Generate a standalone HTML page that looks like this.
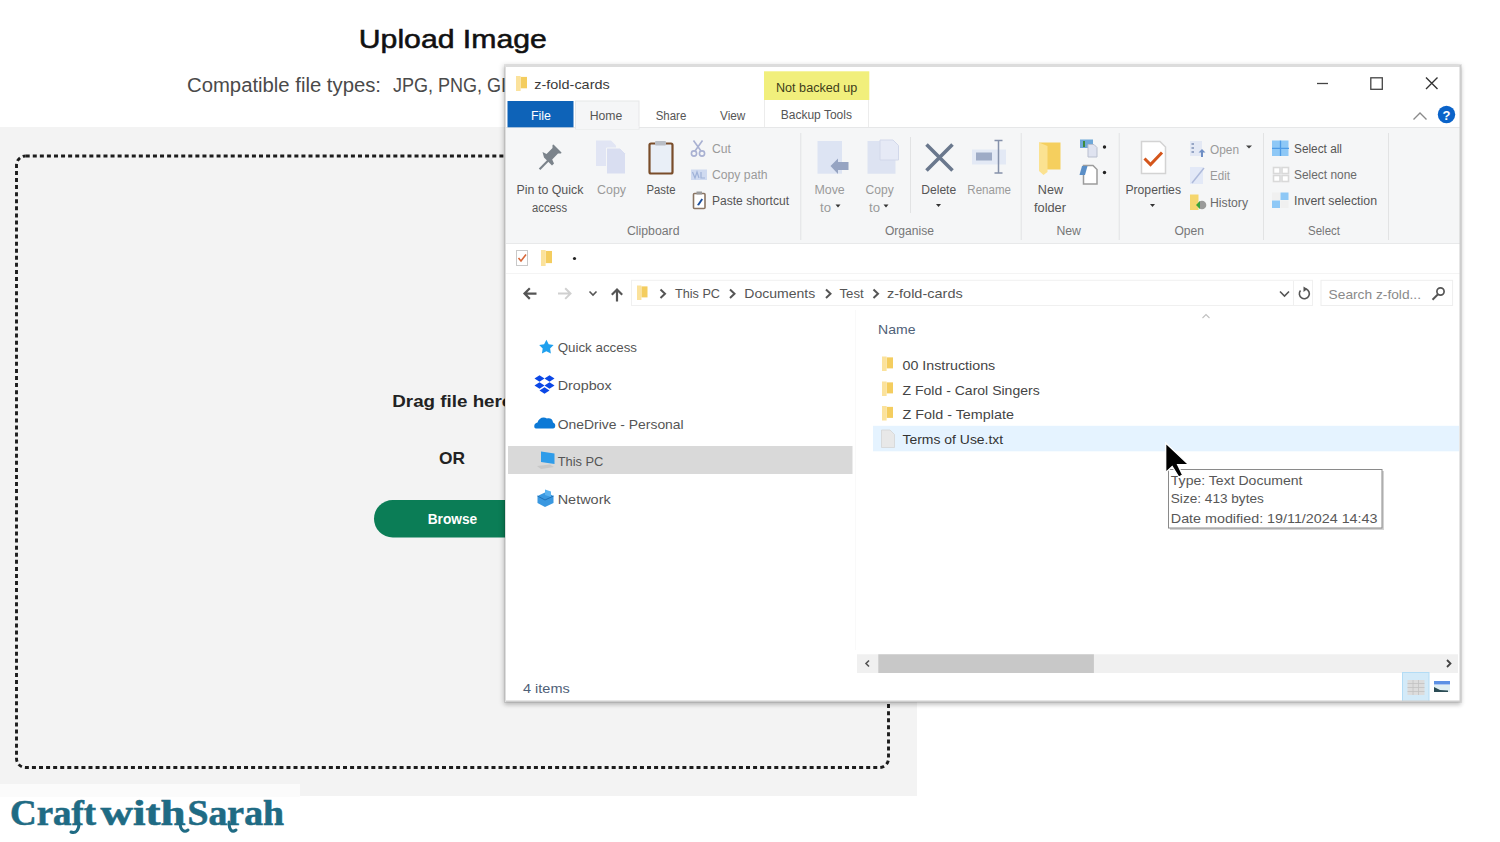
<!DOCTYPE html>
<html><head><meta charset="utf-8"><title>Upload Image</title>
<style>
html,body{margin:0;padding:0;background:#fff;width:1500px;height:842px;overflow:hidden;font-family:"Liberation Sans",sans-serif;}
.layer{position:absolute;left:0;top:0;}
.wrap{position:absolute;left:0;top:0;width:1500px;height:842px;}
.win{position:absolute;left:505px;top:65px;width:956px;height:637px;background:#fff;
 box-shadow:0 0 0 1px rgba(0,0,0,0.07), -1px 1px 5px 1px rgba(0,0,0,0.16), 0 3px 4px rgba(0,0,0,0.12);}

</style></head><body><div class="wrap">
<svg class="layer" width="1500" height="842" viewBox="0 0 1500 842">
<rect x="0" y="127" width="917" height="669" fill="#f3f3f3"/><rect x="0" y="784" width="300" height="13" fill="#fbfbfb"/><rect x="16.5" y="156" width="872" height="611.5" rx="9" ry="9" fill="none" stroke="#1c1c1c" stroke-width="2.9" stroke-dasharray="4 3.07" stroke-dashoffset="-0.2"/><text x="358.8" y="48.3" font-family="Liberation Sans" font-size="26.5" fill="#111" textLength="188" lengthAdjust="spacingAndGlyphs" stroke="#111" stroke-width="0.55">Upload Image</text>
<text x="187" y="91.5" font-family="Liberation Sans" font-size="19.5" fill="#4a4a4a" textLength="194" lengthAdjust="spacingAndGlyphs">Compatible file types:</text>
<text x="393" y="91.5" font-family="Liberation Sans" font-size="19.5" fill="#4a4a4a" textLength="124" lengthAdjust="spacingAndGlyphs">JPG, PNG, GIF</text>
<text x="392.3" y="407.3" font-family="Liberation Sans" font-size="17" fill="#222" font-weight="bold" textLength="120" lengthAdjust="spacingAndGlyphs">Drag file here</text>
<text x="439" y="463.8" font-family="Liberation Sans" font-size="17" fill="#222" font-weight="bold" textLength="26" lengthAdjust="spacingAndGlyphs">OR</text>
<rect x="374" y="500" width="156" height="37.5" rx="18.75" fill="#0b7d56"/><text x="427.7" y="524.4" font-family="Liberation Sans" font-size="14" fill="#ffffff" font-weight="bold" textLength="49.5" lengthAdjust="spacingAndGlyphs">Browse</text>
<text x="10" y="825" font-family="Liberation Serif" font-size="35" fill="#1f6b84" font-weight="bold" textLength="86" lengthAdjust="spacingAndGlyphs" stroke="#1f6b84" stroke-width="0.6">Craft</text>
<text x="100.5" y="825" font-family="Liberation Serif" font-size="35" fill="#1f6b84" font-weight="bold" textLength="85" lengthAdjust="spacingAndGlyphs" stroke="#1f6b84" stroke-width="0.6">with</text>
<text x="187.5" y="825" font-family="Liberation Serif" font-size="35" fill="#1f6b84" font-weight="bold" textLength="96.5" lengthAdjust="spacingAndGlyphs" stroke="#1f6b84" stroke-width="0.6">Sarah</text>
<g fill="none" stroke="#1f6b84" stroke-width="3" stroke-linecap="round"><path d="M79 823 C79 830 76 834 71 832"/><path d="M180 822 C180 830 184 833 188 830"/><path d="M229 822 C229 830 232 833 236 830"/></g></svg>
<div class="win"><svg width="956" height="637" viewBox="0 0 956 637">
<rect x="0" y="0" width="956" height="637" fill="#fff"/><rect x="0" y="0" width="956" height="2" fill="#dcdcdc"/><rect x="1" y="62.5" width="954" height="116.0" fill="#f5f6f7"/><rect x="1" y="62" width="954" height="1" fill="#e6e7e8"/><rect x="1" y="178" width="954" height="1" fill="#e8e9ea"/><rect x="2.5" y="36" width="66" height="26.3" fill="#0e63b8"/><text x="26" y="55" font-family="Liberation Sans" font-size="12.5" fill="#ffffff" textLength="20" lengthAdjust="spacingAndGlyphs">File</text>
<rect x="70.5" y="36" width="63.5" height="28" fill="#f5f6f7" stroke="#e6e7e8" stroke-width="1"/><rect x="71" y="61" width="62.5" height="3" fill="#f5f6f7"/><text x="84.7" y="54.5" font-family="Liberation Sans" font-size="12.5" fill="#555" textLength="32.6" lengthAdjust="spacingAndGlyphs">Home</text>
<text x="150.7" y="54.5" font-family="Liberation Sans" font-size="12.5" fill="#555" textLength="30.6" lengthAdjust="spacingAndGlyphs">Share</text>
<text x="215" y="54.5" font-family="Liberation Sans" font-size="12.5" fill="#555" textLength="25.3" lengthAdjust="spacingAndGlyphs">View</text>
<rect x="259" y="6.3" width="105.3" height="28.7" fill="#f1ef7c"/><text x="271" y="27" font-family="Liberation Sans" font-size="12.5" fill="#3d3d1a" textLength="81.3" lengthAdjust="spacingAndGlyphs">Not backed up</text>
<rect x="259" y="35" width="1" height="27" fill="#ececec"/><rect x="363" y="35" width="1" height="27" fill="#ececec"/><text x="275.7" y="54" font-family="Liberation Sans" font-size="12.5" fill="#555" textLength="71.3" lengthAdjust="spacingAndGlyphs">Backup Tools</text>
<text x="29.3" y="24" font-family="Liberation Sans" font-size="13.5" fill="#3a3a3a" textLength="75.4" lengthAdjust="spacingAndGlyphs">z-fold-cards</text>
<text x="11.6" y="129" font-family="Liberation Sans" font-size="12.5" fill="#555" textLength="66.8" lengthAdjust="spacingAndGlyphs">Pin to Quick</text>
<text x="27" y="146.5" font-family="Liberation Sans" font-size="12.5" fill="#555" textLength="35" lengthAdjust="spacingAndGlyphs">access</text>
<text x="92" y="129" font-family="Liberation Sans" font-size="12.5" fill="#9a9a9a" textLength="29" lengthAdjust="spacingAndGlyphs">Copy</text>
<text x="141.5" y="129" font-family="Liberation Sans" font-size="12.5" fill="#555" textLength="29" lengthAdjust="spacingAndGlyphs">Paste</text>
<text x="207" y="88.2" font-family="Liberation Sans" font-size="12.5" fill="#9a9a9a" textLength="19" lengthAdjust="spacingAndGlyphs">Cut</text>
<text x="207" y="114.2" font-family="Liberation Sans" font-size="12.5" fill="#9a9a9a" textLength="55.6" lengthAdjust="spacingAndGlyphs">Copy path</text>
<text x="207" y="140.2" font-family="Liberation Sans" font-size="12.5" fill="#555" textLength="77" lengthAdjust="spacingAndGlyphs">Paste shortcut</text>
<text x="122" y="169.8" font-family="Liberation Sans" font-size="12.5" fill="#777" textLength="52.5" lengthAdjust="spacingAndGlyphs">Clipboard</text>
<text x="309.4" y="129" font-family="Liberation Sans" font-size="12.5" fill="#9a9a9a" textLength="30.4" lengthAdjust="spacingAndGlyphs">Move</text>
<text x="315" y="146.5" font-family="Liberation Sans" font-size="12.5" fill="#9a9a9a" textLength="11" lengthAdjust="spacingAndGlyphs">to</text>
<text x="360.6" y="129" font-family="Liberation Sans" font-size="12.5" fill="#9a9a9a" textLength="28.2" lengthAdjust="spacingAndGlyphs">Copy</text>
<text x="364" y="146.5" font-family="Liberation Sans" font-size="12.5" fill="#9a9a9a" textLength="11" lengthAdjust="spacingAndGlyphs">to</text>
<text x="416.3" y="129" font-family="Liberation Sans" font-size="12.5" fill="#555" textLength="34.9" lengthAdjust="spacingAndGlyphs">Delete</text>
<text x="462.3" y="129" font-family="Liberation Sans" font-size="12.5" fill="#9a9a9a" textLength="43.7" lengthAdjust="spacingAndGlyphs">Rename</text>
<text x="379.9" y="169.9" font-family="Liberation Sans" font-size="12.5" fill="#777" textLength="49" lengthAdjust="spacingAndGlyphs">Organise</text>
<text x="532.8" y="129" font-family="Liberation Sans" font-size="12.5" fill="#555" textLength="25.2" lengthAdjust="spacingAndGlyphs">New</text>
<text x="529" y="146.5" font-family="Liberation Sans" font-size="12.5" fill="#555" textLength="32" lengthAdjust="spacingAndGlyphs">folder</text>
<text x="551.4" y="170" font-family="Liberation Sans" font-size="12.5" fill="#777" textLength="24.6" lengthAdjust="spacingAndGlyphs">New</text>
<text x="620.4" y="129" font-family="Liberation Sans" font-size="12.5" fill="#555" textLength="55.6" lengthAdjust="spacingAndGlyphs">Properties</text>
<text x="705" y="89" font-family="Liberation Sans" font-size="12.5" fill="#9a9a9a" textLength="29" lengthAdjust="spacingAndGlyphs">Open</text>
<text x="705" y="115" font-family="Liberation Sans" font-size="12.5" fill="#9a9a9a" textLength="20" lengthAdjust="spacingAndGlyphs">Edit</text>
<text x="705" y="142" font-family="Liberation Sans" font-size="12.5" fill="#6a6a6a" textLength="38" lengthAdjust="spacingAndGlyphs">History</text>
<text x="669.4" y="170" font-family="Liberation Sans" font-size="12.5" fill="#777" textLength="29.6" lengthAdjust="spacingAndGlyphs">Open</text>
<text x="789" y="88" font-family="Liberation Sans" font-size="12.5" fill="#555" textLength="48" lengthAdjust="spacingAndGlyphs">Select all</text>
<text x="789" y="114" font-family="Liberation Sans" font-size="12.5" fill="#6a6a6a" textLength="63" lengthAdjust="spacingAndGlyphs">Select none</text>
<text x="789" y="140" font-family="Liberation Sans" font-size="12.5" fill="#555" textLength="83" lengthAdjust="spacingAndGlyphs">Invert selection</text>
<text x="803" y="170" font-family="Liberation Sans" font-size="12.5" fill="#777" textLength="32" lengthAdjust="spacingAndGlyphs">Select</text>
<rect x="295.3" y="68" width="1" height="107" fill="#e2e3e4"/><rect x="405" y="72" width="1" height="76" fill="#e2e3e4"/><rect x="515.7" y="68" width="1" height="107" fill="#e2e3e4"/><rect x="613.7" y="68" width="1" height="107" fill="#e2e3e4"/><rect x="758" y="68" width="1" height="107" fill="#e2e3e4"/><rect x="883" y="68" width="1" height="107" fill="#e2e3e4"/><rect x="1" y="208" width="954" height="1" fill="#f4f4f4"/><rect x="350" y="245" width="1" height="340" fill="#f9f9f9"/><rect x="126.5" y="215.3" width="681.0" height="25.2" fill="#fff" stroke="#f0f0f0" stroke-width="1"/><rect x="788" y="216" width="1" height="24" fill="#efefef"/><rect x="816" y="215.3" width="131.5999999999999" height="25.2" fill="#fff" stroke="#eeeeee" stroke-width="1"/><text x="170" y="233.3" font-family="Liberation Sans" font-size="13.5" fill="#555" textLength="45" lengthAdjust="spacingAndGlyphs">This PC</text>
<text x="239.3" y="233.3" font-family="Liberation Sans" font-size="13.5" fill="#555" textLength="71" lengthAdjust="spacingAndGlyphs">Documents</text>
<text x="334.5" y="233.3" font-family="Liberation Sans" font-size="13.5" fill="#555" textLength="24.2" lengthAdjust="spacingAndGlyphs">Test</text>
<text x="382" y="233.3" font-family="Liberation Sans" font-size="13.5" fill="#555" textLength="75.7" lengthAdjust="spacingAndGlyphs">z-fold-cards</text>
<text x="823.6" y="233.7" font-family="Liberation Sans" font-size="13.5" fill="#8a8a8a" textLength="92.4" lengthAdjust="spacingAndGlyphs">Search z-fold...</text>
<rect x="3" y="381" width="344.5" height="28" fill="#d9d9d9"/><text x="52.7" y="287" font-family="Liberation Sans" font-size="13.5" fill="#555" textLength="79.3" lengthAdjust="spacingAndGlyphs">Quick access</text>
<text x="52.7" y="325" font-family="Liberation Sans" font-size="13.5" fill="#555" textLength="54" lengthAdjust="spacingAndGlyphs">Dropbox</text>
<text x="52.7" y="363.5" font-family="Liberation Sans" font-size="13.5" fill="#555" textLength="126" lengthAdjust="spacingAndGlyphs">OneDrive - Personal</text>
<text x="52.7" y="401" font-family="Liberation Sans" font-size="13.5" fill="#555" textLength="45.7" lengthAdjust="spacingAndGlyphs">This PC</text>
<text x="52.7" y="438.5" font-family="Liberation Sans" font-size="13.5" fill="#555" textLength="53" lengthAdjust="spacingAndGlyphs">Network</text>
<text x="373.1" y="269" font-family="Liberation Sans" font-size="13.5" fill="#4f6178" textLength="37.4" lengthAdjust="spacingAndGlyphs">Name</text>
<rect x="368" y="360.8" width="586" height="25.5" fill="#e5f3ff"/><text x="397.5" y="304.7" font-family="Liberation Sans" font-size="13.5" fill="#444" textLength="92.7" lengthAdjust="spacingAndGlyphs">00 Instructions</text>
<text x="397.5" y="329.6" font-family="Liberation Sans" font-size="13.5" fill="#444" textLength="137.2" lengthAdjust="spacingAndGlyphs">Z Fold - Carol Singers</text>
<text x="397.5" y="353.8" font-family="Liberation Sans" font-size="13.5" fill="#444" textLength="111.4" lengthAdjust="spacingAndGlyphs">Z Fold - Template</text>
<text x="397.5" y="378.6" font-family="Liberation Sans" font-size="13.5" fill="#333" textLength="100.7" lengthAdjust="spacingAndGlyphs">Terms of Use.txt</text>
<rect x="352" y="589.3" width="601" height="18.7" fill="#f0f0f0"/><rect x="373.3" y="589.3" width="215.60000000000014" height="18.7" fill="#c8c8c8"/><text x="18" y="627.7" font-family="Liberation Sans" font-size="13" fill="#4f6178" textLength="46.7" lengthAdjust="spacingAndGlyphs">4 items</text>
<rect x="665" y="406" width="214" height="59" fill="#c8c8c8" opacity="0.8"/><rect x="663.5" y="404.5" width="213.5" height="58.5" fill="#fff" stroke="#8a8a8a" stroke-width="1"/><text x="665.8" y="420" font-family="Liberation Sans" font-size="13.5" fill="#575757" textLength="131.7" lengthAdjust="spacingAndGlyphs">Type: Text Document</text>
<text x="665.8" y="438.3" font-family="Liberation Sans" font-size="13.5" fill="#575757" textLength="93" lengthAdjust="spacingAndGlyphs">Size: 413 bytes</text>
<text x="665.8" y="457.5" font-family="Liberation Sans" font-size="13.5" fill="#575757" textLength="206.7" lengthAdjust="spacingAndGlyphs">Date modified: 19/11/2024 14:43</text>
<g transform="translate(-505,-65)"><g transform="translate(516,76)"><rect x="4.62" y="0.90" width="6.38" height="11.40" fill="#f4cd5f"/><rect x="0" y="0" width="4.62" height="15" fill="#fbe29c"/></g><rect x="516.5" y="250.5" width="11" height="15" fill="#fff" stroke="#c9c9c9" stroke-width="1"/><path d="M518.5 258 L521 261 L526 254.5" fill="none" stroke="#d8683a" stroke-width="1.6"/><g transform="translate(541,250)"><rect x="4.62" y="0.96" width="6.38" height="12.16" fill="#f4cd5f"/><rect x="0" y="0" width="4.62" height="16" fill="#fbe29c"/></g><circle cx="574.5" cy="258.5" r="1.6" fill="#222"/><g fill="#7b838b"><path d="M538.8 168.5 L548.5 158.8 L550 160.3 L540.3 170 Z"/><path d="M545 154.5 L553 162.5 L555 160.5 L553.2 156.5 L559 150.5 L562 150.5 L562.5 149.5 L554.5 141.5 L553.5 142 L553.5 145 L547.5 151 L543.5 149 Z" transform="translate(-1,3)"/></g><path d="M596 140.5 L611 140.5 L616 145.5 L616 166 L596 166 Z" fill="#e1e5f4"/><path d="M606.5 148 L620 148 L625.5 153.5 L625.5 174 L606.5 174 Z" fill="#d9def1" stroke="#f5f6f7" stroke-width="1"/><rect x="649.5" y="143.5" width="23" height="30" rx="1.5" fill="#e9eff7" stroke="#7a4d2a" stroke-width="2.2"/><rect x="655" y="141" width="11" height="4.5" rx="1" fill="#b9bec6"/><g stroke="#a9b1d2" stroke-width="1.6" fill="none"><path d="M693.5 140.5 L701 151"/><path d="M702.5 140.5 L695 151"/><circle cx="694" cy="153.5" r="2.6"/><circle cx="702" cy="153.5" r="2.6"/></g><rect x="691" y="169.5" width="16" height="10.5" fill="#cfdaf0"/><path d="M692.5 172 L695 178 L697 172 L699 178 M701 172 L701 178 L705 178" stroke="#9fb2d8" stroke-width="1.2" fill="none"/><rect x="693.5" y="193.5" width="11.5" height="15" rx="1" fill="#fff" stroke="#8a7563" stroke-width="1.6"/><rect x="696.5" y="191.5" width="5.5" height="3" fill="#9a9a9a"/><path d="M697 205 L701.5 198.5 L703 199.5 L699 205.5 Z" fill="#1d4f9c"/><rect x="817.5" y="141" width="24.5" height="32.7" fill="#dde4f3"/><path d="M830.5 166 L838 158.5 L838 162 L848.5 162 L848.5 170 L838 170 L838 174 Z" fill="#96a4c2"/><path d="M867.5 141 L890 141 L895.5 146.5 L895.5 173.7 L867.5 173.7 Z" fill="#dde3f2"/><path d="M880 140 L893 140 L898.5 145.5 L898.5 160 L880 160 Z" fill="#e6eaf6" stroke="#d2d8ea" stroke-width="1"/><path d="M926.5 144.5 L952.5 170.5 M952.5 144.5 L926.5 170.5" stroke="#6a788d" stroke-width="3.6" stroke-linecap="butt"/><rect x="972" y="149.5" width="34" height="15" fill="#e3e9f5"/><rect x="976" y="152.5" width="16" height="8" fill="#9eabc6"/><path d="M998.5 141 L998.5 172.5 M994.5 140.5 L1002.5 140.5 M994.5 173 L1002.5 173" stroke="#8591aa" stroke-width="1.5" fill="none"/><path d="M1039 142.5 L1060.5 142.5 L1060.5 169.5 L1047 169.5 Z" fill="#f5cf5e"/><path d="M1039 142.5 L1047.5 146 L1047.5 172 L1043.5 175 L1039 171 Z" fill="#fbe291"/><rect x="1080" y="139.5" width="13" height="8.5" fill="#6fa8d8"/><rect x="1083" y="141" width="2" height="6" fill="#3c8a3c"/><path d="M1088 144.5 L1094 144.5 L1097 147.5 L1097 157 L1088 157 Z" fill="#dfe3f0" stroke="#b9bfcf" stroke-width="1"/><circle cx="1104.5" cy="147" r="1.7" fill="#222"/><path d="M1083.5 165.5 L1093 165.5 L1097 169.5 L1097 184 L1083.5 184 Z" fill="#fff" stroke="#9c9c9c" stroke-width="1.5"/><path d="M1082 166 L1087.5 166 L1085 175 L1079.5 175 Z" fill="#5b8fc7"/><circle cx="1104.5" cy="172.5" r="1.7" fill="#222"/><path d="M1141.5 141.5 L1160 141.5 L1165.5 147 L1165.5 173.5 L1141.5 173.5 Z" fill="#fff" stroke="#d3d3d3" stroke-width="1.5"/><path d="M1144.5 158.5 L1150.5 164.5 L1162 152.5" stroke="#d4561c" stroke-width="3" fill="none"/><path d="M835.5 204.5 L840.5 204.5 L838 207.5 Z" fill="#333"/><path d="M883.5 204.5 L888.5 204.5 L886 207.5 Z" fill="#333"/><path d="M936.0 204.0 L941.0 204.0 L938.5 207.0 Z" fill="#333"/><path d="M1150.0 204.0 L1155.0 204.0 L1152.5 207.0 Z" fill="#333"/><rect x="1190" y="141" width="12" height="15" fill="#e3e8f4"/><path d="M1191.5 144 L1194 144 M1191.5 148 L1194 148 M1191.5 152 L1194 152" stroke="#7d8fb5" stroke-width="1.6"/><path d="M1202 149 L1205.5 152.5 L1203 152.5 L1203 157 L1201 157 L1201 152.5 L1198.5 152.5 Z" fill="#6e8ec4"/><path d="M1246 145.5 L1252 145.5 L1249 148.5 Z" fill="#444"/><rect x="1190" y="167" width="13" height="17" fill="#e3e9f7"/><path d="M1192 183 L1204 168" stroke="#aebadb" stroke-width="1.5"/><path d="M1190 194.5 L1198.5 194.5 L1198.5 210 L1190 210 Z" fill="#f5d66e"/><circle cx="1202" cy="205" r="4.3" fill="#9a9a9a"/><path d="M1196 205 L1200 201 L1200 209 Z" fill="#3aa33a"/><rect x="1272.0" y="140.5" width="8" height="7.5" fill="#8ec8f6"/><rect x="1280.5" y="140.5" width="8" height="7.5" fill="#8ec8f6"/><rect x="1272.0" y="148.5" width="8" height="7.5" fill="#8ec8f6"/><rect x="1280.5" y="148.5" width="8" height="7.5" fill="#8ec8f6"/><path d="M1280.5 140.5 L1280.5 156 M1272 148.3 L1289 148.3" stroke="#4e9be6" stroke-width="1.3"/><g fill="#fff" stroke="#d9d9d9" stroke-width="1.6"><rect x="1273.5" y="167.5" width="6.5" height="6"/><rect x="1282" y="167.5" width="6.5" height="6"/><rect x="1273.5" y="175.5" width="6.5" height="6"/><rect x="1282" y="175.5" width="6.5" height="6"/></g><rect x="1272.0" y="192.5" width="8" height="7.5" fill="#f0f0f0"/><rect x="1280.5" y="192.5" width="8" height="7.5" fill="#8ec8f6"/><rect x="1272.0" y="200.5" width="8" height="7.5" fill="#8ec8f6"/><rect x="1280.5" y="200.5" width="8" height="7.5" fill="#f0f0f0"/><path d="M1317 83.5 L1328 83.5" stroke="#444" stroke-width="1.3"/><rect x="1370.8" y="77.8" width="11.5" height="11.5" fill="none" stroke="#444" stroke-width="1.3"/><path d="M1426 77.5 L1437.5 89 M1437.5 77.5 L1426 89" stroke="#333" stroke-width="1.4"/><path d="M1413.5 119.5 L1420 113 L1426.5 119.5" fill="none" stroke="#8a8a8a" stroke-width="1.4"/><circle cx="1446.5" cy="114.5" r="8.7" fill="#0a63c9"/><text x="1446.5" y="120" font-size="13" font-weight="bold" fill="#fff" text-anchor="middle">?</text><path d="M524.5 293.6 L536.5 293.6 M529.8 288.3 L524.5 293.6 L529.8 298.9" fill="none" stroke="#555" stroke-width="2.2"/><path d="M558 293.6 L570.5 293.6 M565.2 288.3 L570.5 293.6 L565.2 298.9" fill="none" stroke="#d0d0d0" stroke-width="2"/><path d="M589.5 291.5 L593 295 L596.5 291.5" fill="none" stroke="#555" stroke-width="1.6"/><path d="M617 301.5 L617 289.5 M611.8 294.7 L617 289.5 L622.2 294.7" fill="none" stroke="#555" stroke-width="2.2"/><g transform="translate(637,285.5)"><rect x="4.41" y="0.87" width="6.09" height="11.02" fill="#f4cd5f"/><rect x="0" y="0" width="4.41" height="14.5" fill="#fbe29c"/></g><path d="M660.5 289.5 L665.0 293.8 L660.5 298" fill="none" stroke="#555" stroke-width="2"/><path d="M730 289.5 L734.5 293.8 L730 298" fill="none" stroke="#555" stroke-width="2"/><path d="M826 289.5 L830.5 293.8 L826 298" fill="none" stroke="#555" stroke-width="2"/><path d="M873.5 289.5 L878.0 293.8 L873.5 298" fill="none" stroke="#555" stroke-width="2"/><path d="M1280 291.5 L1284.5 296 L1289 291.5" fill="none" stroke="#555" stroke-width="1.6"/><path d="M1300.5 290.5 A5 5 0 1 0 1306 289" fill="none" stroke="#555" stroke-width="1.6"/><path d="M1303.5 286.5 L1307.5 289 L1303.5 292 Z" fill="#555"/><circle cx="1440.5" cy="291.5" r="3.6" fill="none" stroke="#555" stroke-width="1.7"/><path d="M1438 294.2 L1432.5 299.7" stroke="#555" stroke-width="2"/><path d="M546.40 339.70 L548.69 344.14 L553.63 344.95 L550.11 348.51 L550.87 353.45 L546.40 351.20 L541.93 353.45 L542.69 348.51 L539.17 344.95 L544.11 344.14 Z" fill="#1fa0ee"/><path d="M534.5 378.5 L539.5 375.3 L544.5 378.5 L539.5 381.7 Z" fill="#0b47e6"/><path d="M544.5 378.5 L549.5 375.3 L554.5 378.5 L549.5 381.7 Z" fill="#0b47e6"/><path d="M534.5 385.5 L539.5 382.3 L544.5 385.5 L539.5 388.7 Z" fill="#0b47e6"/><path d="M544.5 385.5 L549.5 382.3 L554.5 385.5 L549.5 388.7 Z" fill="#0b47e6"/><path d="M539.5 390.5 L544.5 387.3 L549.5 390.5 L544.5 393.7 Z" fill="#0b47e6"/><path d="M536 428.5 C533.5 428.5 533.5 423 537.5 422.5 C538.5 418.5 543 416 547 418.5 C549.5 417.5 553 419 553 422.5 C556 423 556 428.5 553 428.5 Z" fill="#0c79d6"/><path d="M541 451.5 L554.5 453.5 L554.5 464 L541 462 Z" fill="#2f9ce9"/><path d="M537 466 L550 464.5 L554 467 L541 469 Z" fill="#c8c8c8"/><path d="M537.5 496 L546 492 L553.5 496 L553.5 503 L545 507 L537.5 503 Z" fill="#3a98e0"/><path d="M545 489.5 L551 491.5 L551 497 L545 495 Z" fill="#5bb3f0"/><path d="M537.5 496 L545 500 L553.5 496" fill="none" stroke="#1e6fb5" stroke-width="1"/><path d="M1202.5 318 L1206 314.5 L1209.5 318" fill="none" stroke="#c0c0c0" stroke-width="1.1"/><g transform="translate(882,356.5)"><rect x="4.62" y="0.87" width="6.38" height="11.02" fill="#f4cd5f"/><rect x="0" y="0" width="4.62" height="14.5" fill="#fbe29c"/></g><g transform="translate(882,381.5)"><rect x="4.62" y="0.87" width="6.38" height="11.02" fill="#f4cd5f"/><rect x="0" y="0" width="4.62" height="14.5" fill="#fbe29c"/></g><g transform="translate(882,406)"><rect x="4.62" y="0.87" width="6.38" height="11.02" fill="#f4cd5f"/><rect x="0" y="0" width="4.62" height="14.5" fill="#fbe29c"/></g><path d="M881.5 430 L890 430 L894.5 434.5 L894.5 447.5 L881.5 447.5 Z" fill="#e8e8e8" stroke="#d4d4d4" stroke-width="0.8"/><path d="M869 660.5 L866 663.5 L869 666.5" fill="none" stroke="#555" stroke-width="1.6"/><path d="M1447 660 L1450.5 663.5 L1447 667" fill="none" stroke="#444" stroke-width="1.8"/><rect x="1402.5" y="672.5" width="26.5" height="29" fill="#d3eaf8" stroke="#b3dcf5" stroke-width="1"/><rect x="1407.5" y="680" width="17" height="15" fill="#dcdcdc"/><path d="M1407.5 683.5 L1424.5 683.5 M1407.5 687.5 L1424.5 687.5 M1407.5 691.5 L1424.5 691.5 M1413 680 L1413 695 M1418.5 680 L1418.5 695" stroke="#c2c2c2" stroke-width="0.8"/><rect x="1434" y="681" width="16" height="3.5" fill="#5c90e4"/><rect x="1434" y="685" width="16" height="7" fill="#dfeef3"/><path d="M1434 687 L1440 690 L1448 690.5 L1448 692 L1434 692 Z" fill="#2b4c55"/><path d="M1165.7 443 L1165.7 472.5 L1172.2 466.5 L1178.8 477 L1182.6 475 L1177.6 464.6 L1188.3 464.4 Z" fill="#000" stroke="#fff" stroke-width="1.3" stroke-linejoin="miter"/></g><rect x="954.5" y="0" width="1.5" height="637" fill="#cdcdcd"/><rect x="0" y="635.5" width="956" height="1.5" fill="#cdcdcd"/><rect x="0" y="0" width="1" height="637" fill="#dedede"/></svg></div>
</div></body></html>
